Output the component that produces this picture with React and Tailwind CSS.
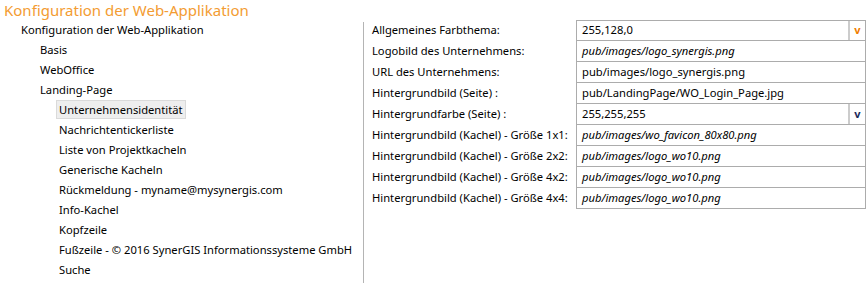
import { useState } from 'react'

const tree = [
  { label: 'Konfiguration der Web-Applikation', level: 0 },
  { label: 'Basis', level: 1 },
  { label: 'WebOffice', level: 1 },
  { label: 'Landing-Page', level: 1 },
  { label: 'Unternehmensidentität', level: 2 },
  { label: 'Nachrichtentickerliste', level: 2 },
  { label: 'Liste von Projektkacheln', level: 2 },
  { label: 'Generische Kacheln', level: 2 },
  { label: 'Rückmeldung - myname@mysynergis.com', level: 2 },
  { label: 'Info-Kachel', level: 2 },
  { label: 'Kopfzeile', level: 2 },
  { label: 'Fußzeile - © 2016 SynerGIS Informationssysteme GmbH', level: 2 },
  { label: 'Suche', level: 2 },
]

const fields = [
  { label: 'Allgemeines Farbthema:', value: '255,128,0', select: 'orange' },
  { label: 'Logobild des Unternehmens:', value: 'pub/images/logo_synergis.png', italic: true },
  { label: 'URL des Unternehmens:', value: 'pub/images/logo_synergis.png' },
  { label: 'Hintergrundbild (Seite) :', value: 'pub/LandingPage/WO_Login_Page.jpg' },
  { label: 'Hintergrundfarbe (Seite) :', value: '255,255,255', select: 'navy' },
  { label: 'Hintergrundbild (Kachel) - Größe 1x1:', value: 'pub/images/wo_favicon_80x80.png', italic: true },
  { label: 'Hintergrundbild (Kachel) - Größe 2x2:', value: 'pub/images/logo_wo10.png', italic: true },
  { label: 'Hintergrundbild (Kachel) - Größe 4x2:', value: 'pub/images/logo_wo10.png', italic: true },
  { label: 'Hintergrundbild (Kachel) - Größe 4x4:', value: 'pub/images/logo_wo10.png', italic: true },
]

const indent = ['pl-[18px]', 'pl-[37px]', 'pl-[56px]']

export default function App() {
  const [selected, setSelected] = useState(4)

  return (
    <div className="h-[283px] w-[868px] overflow-hidden bg-white text-[11.2px] text-black" style={{ fontFamily: '"Noto Sans", "Open Sans", sans-serif' }}>
      <h1 className="h-[19px] pl-[4px] pt-[1px] text-[15px] leading-[18px] text-[#f39c32]">Konfiguration der Web-Applikation</h1>

      <div className="flex">
        <ul className="w-[363px] shrink-0">
          {tree.map((t, i) => (
            <li key={t.label} className={`flex h-[20px] items-center ${indent[t.level]}`}>
              <button
                onClick={() => setSelected(i)}
                className={`h-[19px] whitespace-nowrap border px-[2px] leading-[17px] ${i === selected ? 'border-[#dadada] bg-[#eeeeee]' : 'border-transparent'}`}
              >
                {t.label}
              </button>
            </li>
          ))}
        </ul>

        <div className="mt-[3px] h-[270px] flex-1 border-l border-[#b4b4b4] pr-[2px]">
          <div className="-mt-[2px] grid grid-cols-[212px_1fr]">
            {fields.map((f, i) => (
              <div key={f.label} className="contents">
                <div className="flex h-[21px] items-center pl-[8px] whitespace-nowrap">{f.label}</div>
                <div className={`flex h-[21px] border-x border-b border-[#acacac] ${i === 0 ? 'border-t' : ''}`}>
                  <div className={`flex flex-1 items-center pl-[5px] whitespace-nowrap ${f.italic ? 'italic' : ''}`}>{f.value}</div>
                  {f.select && (
                    <div className={`flex w-[17px] items-center justify-center border-l-2 border-[#cccccc] text-[11px] font-bold ${f.select === 'orange' ? 'text-[#f07d00]' : 'text-[#1a2a5a]'}`}>
                      v
                    </div>
                  )}
                </div>
              </div>
            ))}
          </div>
        </div>
      </div>
    </div>
  )
}
